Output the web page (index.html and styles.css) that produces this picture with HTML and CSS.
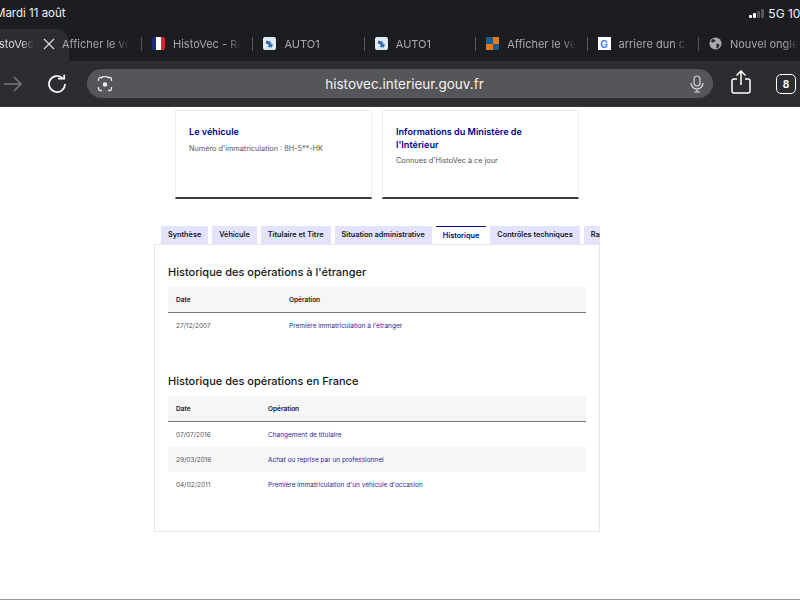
FILE: index.html
```html
<!DOCTYPE html>
<html lang="fr">
<head>
  <meta charset="UTF-8">
  <title>HistoVec</title>
  <link rel="stylesheet" href="styles.css">
</head>
<body>

  <header class="chrome">
    <div class="status">
      <span class="status-date">Mardi 11 août</span>
      <span class="status-right">
        <span class="signal"><i class="on s1"></i><i class="on s2"></i><i class="s3"></i><i class="s4"></i></span>
        <span>5G 100</span>
      </span>
    </div>

    <div class="tabstrip">
      <div class="tab tab-active"><span class="tab-label">HistoVec</span>
        <svg class="tab-close" width="12" height="12" viewBox="0 0 12 12"><path d="M1 1l10 10M11 1L1 11" stroke="#d8d8da" stroke-width="1.300" fill="none"/></svg>
      </div>
      <div class="tab tab-first"><span class="tab-label">Afficher le véhicule</span></div>
      <div class="tab">
        <span class="favicon flag"><i class="blue"></i><i class="white"></i><i class="red"></i></span>
        <span class="tab-label">HistoVec - Rapport</span>
      </div>
      <div class="tab">
        <span class="favicon auto"><svg width="13" height="13" viewBox="0 0 13 13"><path d="M3 3.500l6 1.500-2 1 3 2-1.500 2.500-4-.5 1.500-2-3-1.500z" fill="#2f6fa8"/></svg></span>
        <span class="tab-label">AUTO1</span>
      </div>
      <div class="tab">
        <span class="favicon auto"><svg width="13" height="13" viewBox="0 0 13 13"><path d="M3 3.500l6 1.500-2 1 3 2-1.500 2.500-4-.5 1.500-2-3-1.500z" fill="#2f6fa8"/></svg></span>
        <span class="tab-label">AUTO1</span>
      </div>
      <div class="tab">
        <span class="favicon checker"><i class="c-blue"></i><i class="c-orange"></i><i class="c-orange"></i><i class="c-blue"></i></span>
        <span class="tab-label">Afficher le véhicule</span>
      </div>
      <div class="tab">
        <span class="favicon google">G</span>
        <span class="tab-label">arriere dun camion</span>
      </div>
      <div class="tab">
        <svg class="globe" width="13" height="13" viewBox="0 0 14 14"><circle cx="7" cy="7" r="6.500" fill="#a9a9ac"/><path d="M4 2l3 1.500-1 2-2.500 .5-1.500-1zM8 7l3.500 1-1.500 3.500-2 1z" fill="#26272a"/></svg>
        <span class="tab-label">Nouvel onglet</span>
      </div>
    </div>

    <div class="toolbar">
      <svg class="tool-forward" width="20" height="18" viewBox="0 0 20 18"><path d="M1 9h17M11 2l7 7-7 7" stroke="#77787b" stroke-width="1.500" fill="none"/></svg>
      <svg class="tool-reload" width="20" height="20" viewBox="0 0 20 20"><path d="M15.500 4.200A8 8 0 1 0 18 10" stroke="#fff" stroke-width="1.700" fill="none"/><path d="M11 4.600h6.200V.8" stroke="#fff" stroke-width="1.700" fill="none"/></svg>
      <div class="address">
        <svg class="lens" width="16" height="16" viewBox="0 0 16 16"><path d="M1.500 5V3.500a2 2 0 0 1 2-2h1.500l1-1h4l1 1h1.500a2 2 0 0 1 2 2V5M14.500 11v1.500a2 2 0 0 1-2 2H11M1.500 11v1.500a2 2 0 0 0 2 2H5" stroke="#e6e6e8" stroke-width="1.300" fill="none"/><circle cx="8" cy="8.500" r="2.300" fill="#e6e6e8"/></svg>
        <span class="url">histovec.interieur.gouv.fr</span>
        <svg class="mic" width="14" height="18" viewBox="0 0 14 18"><rect x="4" y="1" width="6" height="10" rx="3" stroke="#d8d8da" stroke-width="1.200" fill="none"/><path d="M1 8a6 6 0 0 0 12 0M7 14v3M4 17h6" stroke="#d8d8da" stroke-width="1.200" fill="none"/></svg>
      </div>
      <svg class="share" width="20" height="24" viewBox="0 0 20 24"><path d="M6 9H3a2 2 0 0 0-2 2v10a2 2 0 0 0 2 2h14a2 2 0 0 0 2-2V11a2 2 0 0 0-2-2h-3M10 15V1.500M5.500 5.500L10 1l4.500 4.500" stroke="#fff" stroke-width="1.500" fill="none"/></svg>
      <span class="tab-count">8</span>
    </div>
  </header>

  <main class="page">
    <div class="cards">
      <div class="card">
        <h3>Le véhicule</h3>
        <p>Numéro d'immatriculation : 8H-5**-HK</p>
      </div>
      <div class="card">
        <h3>Informations du Ministère de l'Intérieur</h3>
        <p>Connues d'HistoVec à ce jour</p>
      </div>
    </div>

    <nav class="tabs">
      <a>Synthèse</a>
      <a>Véhicule</a>
      <a>Titulaire et Titre</a>
      <a>Situation administrative</a>
      <a class="current">Historique</a>
      <a>Contrôles techniques</a>
      <a>Rapport</a>
    </nav>

    <section class="panel">
      <h2>Historique des opérations à l'étranger</h2>
      <table class="ops ops-abroad">
        <thead>
          <tr><th class="col-date">Date</th><th>Opération</th></tr>
        </thead>
        <tbody>
          <tr><td>27/12/2007</td><td class="op">Première immatriculation à l'étranger</td></tr>
        </tbody>
      </table>

      <h2 class="second">Historique des opérations en France</h2>
      <table class="ops ops-france">
        <thead>
          <tr><th class="col-date">Date</th><th>Opération</th></tr>
        </thead>
        <tbody>
          <tr><td>07/07/2016</td><td class="op">Changement de titulaire</td></tr>
          <tr class="even"><td>29/03/2016</td><td class="op">Achat ou reprise par un professionnel</td></tr>
          <tr><td>04/02/2011</td><td class="op">Première immatriculation d'un véhicule d'occasion</td></tr>
        </tbody>
      </table>
    </section>
  </main>

  <div class="bottom-line"></div>

</body>
</html>
```

FILE: styles.css
```css
html, body {
  margin: 0;
  height: 600px;
  overflow: hidden;
  background-color: #fff;
}

body {
  display: flex;
  flex-direction: column;
  font-family: "Inter", "Liberation Sans", sans-serif;
  color: #161616;
}

/* browser chrome */
.chrome {
  height: 107px;
  flex: none;
  background-color: #1c1d20;
  color: #fff;
  overflow: hidden;
}

.status {
  height: 29px;
  box-sizing: border-box;
  padding-bottom: 3px;
  display: flex;
  justify-content: space-between;
  align-items: center;
  font-size: 11.500px;
  color: #f0f0f0;
  white-space: nowrap;
  overflow: hidden;
}

.status-date {
  margin-left: -5px;
}

.status-right {
  display: flex;
  align-items: center;
  gap: 4px;
  margin-right: -8px;
  font-size: 12px;
}

.signal {
  display: flex;
  align-items: flex-end;
  gap: 1px;
  height: 9px;
}

.signal i {
  width: 3px;
  background-color: #55565a;
  border-radius: 1px;
}

.signal .on { background-color: #fff; }
.s1 { height: 3px; }
.s2 { height: 5px; }
.s3 { height: 7px; }
.s4 { height: 9px; }

.tabstrip {
  height: 32px;
  display: flex;
  align-items: center;
  padding-bottom: 3px;
  box-sizing: border-box;
  font-size: 11px;
  color: #a8a8ab;
  white-space: nowrap;
}

.tab {
  width: 111.400px;
  height: 29px;
  flex: none;
  box-sizing: border-box;
  display: flex;
  align-items: center;
  gap: 8px;
  padding: 0 11px;
  position: relative;
}

.tab + .tab::before {
  content: "";
  position: absolute;
  left: 0;
  top: 8px;
  height: 14px;
  width: 1px;
  background-color: #56575a;
}

.tab-label {
  flex: 1;
  overflow: hidden;
  -webkit-mask-image: linear-gradient(to right, #000 80%, transparent);
  mask-image: linear-gradient(to right, #000 80%, transparent);
}

.tab-active {
  width: 74px;
  height: 32px;
  margin-left: -5px;
  padding: 0 14px 3px 0;
  gap: 9px;
  background-color: #2c2d30;
  border-radius: 0 14px 0 0;
  color: #d8d8da;
  align-self: flex-start;
}

.tab-active .tab-label {
  direction: rtl;
  -webkit-mask-image: linear-gradient(to right, #000 70%, transparent);
  mask-image: linear-gradient(to right, #000 70%, transparent);
}

.tab-active + .tab::before { display: none; }

.tab-first {
  width: 79px;
  margin-left: -7px;
  padding: 0 12px 0 0;
}

.favicon {
  width: 13px;
  height: 13px;
  flex: none;
  border-radius: 2px;
  overflow: hidden;
  display: flex;
}

.flag i { flex: 1; }
.flag .blue { background-color: #1d2a80; }
.flag .white { background-color: #fff; }
.flag .red { background-color: #e1222e; }

.auto {
  background-color: #dcebf6;
}

.checker {
  display: grid;
  grid-template-columns: 1fr 1fr;
  border-radius: 0;
}

.c-blue { background-color: #1f5c8a; }
.c-orange { background-color: #e57a1b; }

.google {
  background-color: #fff;
  color: #4285f4;
  font-size: 10px;
  font-weight: bold;
  align-items: center;
  justify-content: center;
  border-radius: 0;
}

.toolbar {
  height: 46px;
  box-sizing: border-box;
  background-color: #2c2d30;
  display: flex;
  align-items: center;
  padding: 0 4px 0 3px;
  border-bottom: 1px solid #3a3b3e;
}

.tool-forward { margin-right: 24px; }
.tool-reload { margin-right: 20px; }

.address {
  flex: 1;
  height: 29px;
  margin-right: 18px;
  background-color: #55565a;
  border-radius: 15px;
  display: flex;
  align-items: center;
  justify-content: space-between;
  padding: 0 9px 0 10px;
}

.url {
  font-size: 13.500px;
  color: #f2f2f2;
  margin-left: 6px;
}

.share { margin-right: 25px; margin-bottom: 3px; }

.tab-count {
  width: 18px;
  height: 18px;
  border: 1.500px solid #fff;
  border-radius: 5px;
  font-size: 10px;
  font-weight: bold;
  display: flex;
  align-items: center;
  justify-content: center;
}

/* page */
.page {
  flex: 1;
  padding-left: 154px;
  width: 446px;
}

.cards {
  display: flex;
  gap: 10px;
  margin: 3px 0 0 21px;
  width: 404px;
}

.card {
  flex: 1;
  height: 89px;
  box-sizing: border-box;
  padding: 15px 13px 0;
  border: 1px solid #eeeeee;
  border-bottom: 2px solid #3a3a3a;
}

.card h3 {
  margin: 0 0 4px;
  font-size: 9.100px;
  line-height: 12.500px;
  font-weight: 600;
  color: #000091;
}

.card p {
  margin: 0;
  font-size: 7.300px;
  line-height: 12px;
  color: #555;
}

.tabs {
  display: flex;
  gap: 4px;
  margin: 27px 0 0 7px;
  width: 439px;
  overflow: hidden;
  white-space: nowrap;
}

.tabs a {
  flex: none;
  height: 18px;
  box-sizing: border-box;
  padding: 0 7px;
  background-color: #e3e3fd;
  font-size: 7.300px;
  font-weight: 600;
  line-height: 18px;
  color: #161616;
}

.tabs .current {
  background-color: #fff;
  border-top: 1px solid #000091;
  line-height: 17px;
  color: #000091;
}

.panel {
  height: 288px;
  box-sizing: border-box;
  border: 1px solid #e8e8e8;
  padding: 20px 13px 0;
}

h2 {
  margin: 0;
  height: 22px;
  font-size: 11px;
  line-height: 14px;
  font-weight: 500;
  color: #161616;
}

h2.second {
  margin-top: 36px;
}

.ops {
  width: 100%;
  border-collapse: collapse;
  font-size: 6.500px;
  color: #555;
  table-layout: fixed;
}

.ops th {
  height: 25px;
  padding: 0 8px;
  text-align: left;
  font-weight: 600;
  color: #161616;
  background-color: #f6f6f6;
  border-bottom: 1px solid #777;
}

.ops td {
  height: 25px;
  padding: 0 8px;
}

.ops-abroad .col-date { width: 97px; }
.ops-france .col-date { width: 76px; }

.op { color: #1f1f8f; }
.even td { background-color: #f6f6f6; }

.bottom-line {
  flex: none;
  height: 1px;
  background-color: #999;
}
```
